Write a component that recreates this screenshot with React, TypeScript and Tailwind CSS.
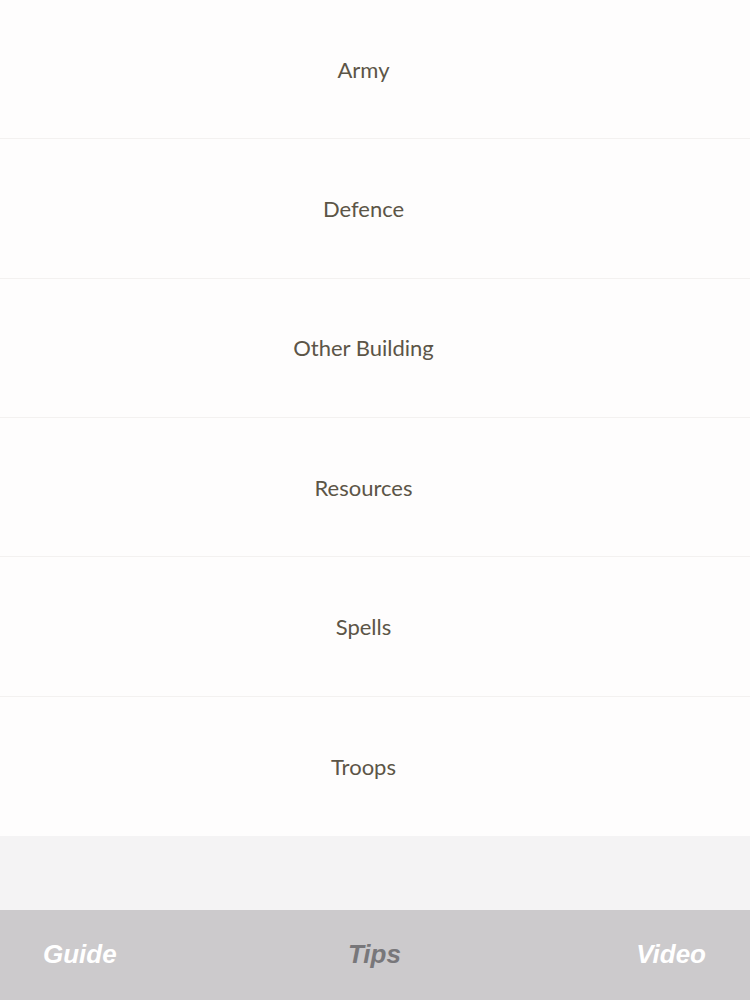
import React from 'react';

const categories = ['Army', 'Defence', 'Other Building', 'Resources', 'Spells', 'Troops'];

const App: React.FC = () => {
  return (
    <div className="flex flex-col h-[1000px] w-full bg-[#f4f3f4] overflow-hidden">
      {/* Category list */}
      <ul className="flex flex-col bg-[#fefdfd]">
        {categories.map((name, i) => (
          <li
            key={name}
            className={`h-[139.33px] flex items-center justify-center pr-[23px] text-[22px] text-[#5c5547] ${
              i < categories.length - 1 ? 'border-b border-[#f3f1f0]' : ''
            }`}
            style={{ fontFamily: '"Gill Sans", Lato, "Open Sans", sans-serif' }}
          >
            {name}
          </li>
        ))}
      </ul>

      <div className="flex-1" />

      {/* Tab bar */}
      <nav
        className="h-[90px] bg-[#cccacc] flex items-center justify-between pl-[43px] pr-[44px] pb-[1px] text-[26px] font-bold italic"
        style={{ fontFamily: '"Liberation Sans", Arial, sans-serif' }}
      >
        <span className="text-white">Guide</span>
        <span className="text-[#78777a] mr-[4px]">Tips</span>
        <span className="text-white">Video</span>
      </nav>
    </div>
  );
};

export default App;
